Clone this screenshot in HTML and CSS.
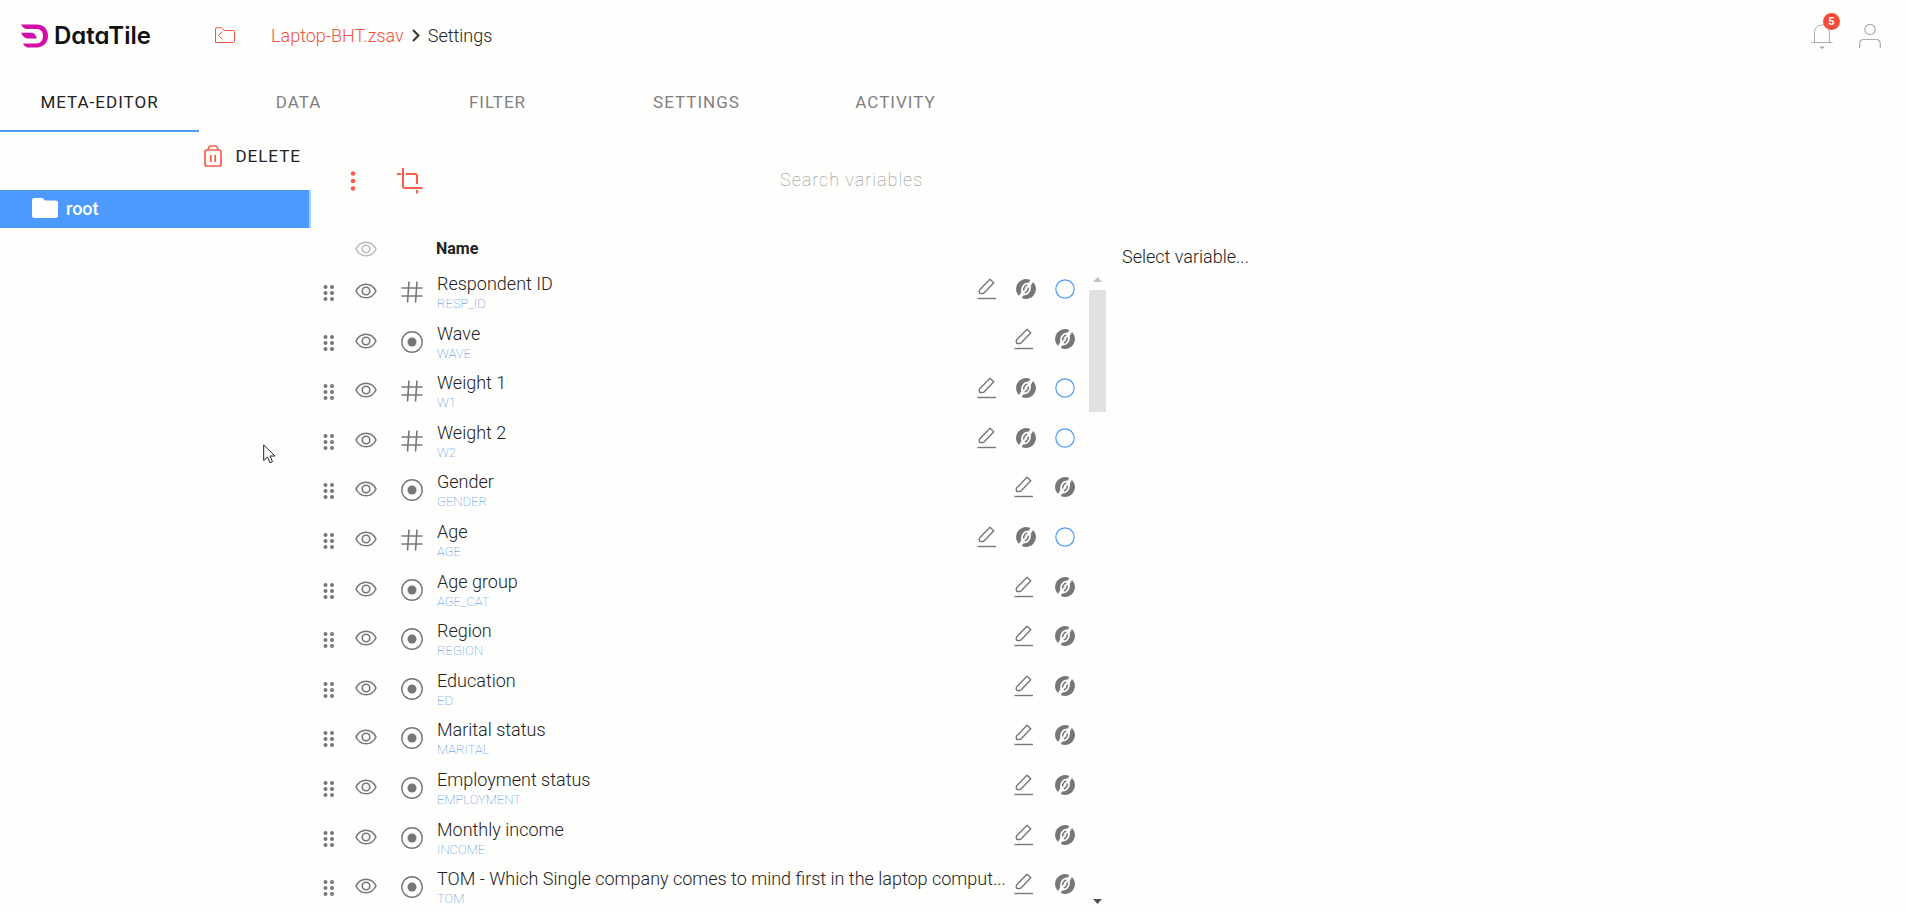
FILE: index.html
```html
<!DOCTYPE html>
<html lang="en">
<head>
    <meta charset="UTF-8">
    <meta name="viewport" content="width=device-width, initial-scale=1.0">
    <title>DataTile - Settings</title>
    <link rel="stylesheet" href="styles.css">
</head>
<body>

    <!-- Icon set -->
    <svg class="icon-set" aria-hidden="true">
        <symbol id="icon-drag" viewBox="0 0 12 18">
            <g fill="currentColor"><circle cx="2.5" cy="3" r="2"/><circle cx="9" cy="3" r="2"/><circle cx="2.5" cy="9" r="2"/><circle cx="9" cy="9" r="2"/><circle cx="2.5" cy="15" r="2"/><circle cx="9" cy="15" r="2"/></g>
        </symbol>
        <symbol id="icon-eye" viewBox="0 0 22 16">
            <path d="M1 8C3.200 3.600 6.800 1.200 11 1.200S18.800 3.600 21 8c-2.200 4.400-5.800 6.800-10 6.800S3.200 12.400 1 8z" fill="none" stroke="currentColor" stroke-width="1.600"/>
            <circle cx="11" cy="8" r="3.800" fill="none" stroke="currentColor" stroke-width="1.600"/>
        </symbol>
        <symbol id="icon-number" viewBox="0 0 22 22">
            <path d="M8 0.500L6.500 21.500M16 0.500L14.500 21.500M0.500 7H21.500M0.500 15H21.500" fill="none" stroke="currentColor" stroke-width="1.600"/>
        </symbol>
        <symbol id="icon-single" viewBox="0 0 22 22">
            <circle cx="11" cy="11" r="10.200" fill="none" stroke="currentColor" stroke-width="1.400"/>
            <circle cx="11" cy="11" r="4.500" fill="currentColor"/>
        </symbol>
        <symbol id="icon-edit" viewBox="0 0 20 22">
            <path d="M3 11.500L13 1.300L16.800 4.800L7 15Q6.500 15.500 5.800 15.500H3.500Q2.300 15.500 2.300 14.300V13Q2.300 12.200 3 11.500z" fill="none" stroke="currentColor" stroke-width="1.400" stroke-linejoin="round"/>
            <path d="M0.500 20.500H19" stroke="currentColor" stroke-width="1.400"/>
        </symbol>
        <symbol id="icon-missing" viewBox="0 0 20 20">
            <path d="M6 0.900A9.800 9.800 0 0 1 14.300 1.100L12.800 3.600C8 3.400 4.600 7.200 5.200 13.200L3 17A9.900 9.900 0 0 1 6 0.900z" fill="currentColor"/>
            <path d="M14 19.100A9.800 9.800 0 0 1 5.700 18.900L7.200 16.400C12 16.600 15.400 12.800 14.800 6.800L17 3A9.900 9.900 0 0 1 14 19.100z" fill="currentColor"/>
            <path d="M7.600 11.500Q7.600 7.500 11.200 6M12.400 8.500Q12.400 12.500 8.800 14" fill="none" stroke="currentColor" stroke-width="1.500"/>
        </symbol>
        <symbol id="icon-weight" viewBox="0 0 20 20">
            <circle cx="10" cy="10" r="9.200" fill="none" stroke="currentColor" stroke-width="1.200"/>
        </symbol>
    </svg>

    <header class="topbar">
        <a class="logo" href="#">
            <svg width="27" height="24" viewBox="0 0 27 24">
                <path d="M0 0.500H15.500C22.500 0.500 27 5 27 11.800S22.500 23.500 15.500 23.500H6.500Q3.500 23 2 19.500H15C19.500 19.500 22 16.500 22 12S19.500 5 15 5H5.500Q2 4.500 0 0.500z" fill="#d10fa8"/>
                <path d="M0 8.800H11.500Q14.500 10 16 14.500H6Q2 13.500 0 8.800z" fill="#d10fa8"/>
            </svg>
            <span>DataTile</span>
        </a>
        <button class="icon-button back" aria-label="Back to folder">
            <svg width="21" height="17" viewBox="0 0 21 17" fill="none" stroke="currentColor" stroke-width="1">
                <path d="M0.500 15.500V2Q0.500 0.800 1.700 0.800H6.500L9.500 3.500H18.500Q19.500 3.500 19.500 4.500V14.500Q19.500 15.500 18.500 15.500z"/>
                <path d="M7.500 4.500L3.500 8.500L7.500 12.500"/>
            </svg>
        </button>
        <nav class="breadcrumb">
            <a href="#">Laptop-BHT.zsav</a>
            <svg width="8" height="13" viewBox="0 0 8 13"><path d="M1 1L6.500 6.500L1 12" fill="none" stroke="#333" stroke-width="2"/></svg>
            <span>Settings</span>
        </nav>
        <div class="user-tools">
            <button class="icon-button bell" aria-label="Notifications">
                <svg width="22" height="26" viewBox="0 0 22 26" fill="none" stroke="currentColor" stroke-width="1">
                    <path d="M0.500 19.500H21.500M3.500 19V10C3.500 5 6.500 2 11 2S18.500 5 18.500 10V19"/>
                    <path d="M9 24H13L11 25.500z" fill="currentColor"/>
                </svg>
                <span class="badge">5</span>
            </button>
            <button class="icon-button" aria-label="Account">
                <svg width="22" height="26" viewBox="0 0 22 26" fill="none" stroke="currentColor" stroke-width="1.200">
                    <circle cx="11" cy="6.500" r="5.200"/>
                    <path d="M0.700 25V21Q0.700 16.500 5 16.500H17Q21.300 16.500 21.300 21V25"/>
                </svg>
            </button>
        </div>
    </header>

    <nav class="tabs">
        <a class="tab active" href="#">META-EDITOR</a>
        <a class="tab" href="#">DATA</a>
        <a class="tab" href="#">FILTER</a>
        <a class="tab" href="#">SETTINGS</a>
        <a class="tab" href="#">ACTIVITY</a>
    </nav>

    <main class="editor">
        <aside class="sidebar">
            <button class="delete">
                <svg width="18" height="22" viewBox="0 0 18 22" fill="none" stroke="#f95c4b" stroke-width="1.700">
                    <rect x="1" y="5" width="16" height="16" rx="2"/>
                    <path d="M4 5Q4.500 1 7 1H11Q13.500 1 14 5M6.800 10V17M11.200 10V17"/>
                </svg>
                DELETE
            </button>
            <a class="folder" href="#">
                <svg width="26" height="20" viewBox="0 0 26 20"><path d="M2 0H10.500L13 2.500H23.500Q26 2.500 26 5V17.500Q26 20 23.500 20H2.500Q0 20 0 17.500V2Q0 0 2 0z" fill="#fff"/></svg>
                root
            </a>
        </aside>

        <section class="variables">
            <div class="toolbar">
                <button class="icon-button accent" aria-label="More">
                    <svg width="6" height="20" viewBox="0 0 6 20" fill="currentColor"><circle cx="3" cy="2.500" r="2.300"/><circle cx="3" cy="10" r="2.300"/><circle cx="3" cy="17.500" r="2.300"/></svg>
                </button>
                <button class="icon-button accent" aria-label="Crop">
                    <svg width="26" height="26" viewBox="0 0 26 26" fill="none" stroke="currentColor" stroke-width="2"><path d="M0 6H4M9 6H18Q20 6 20 8V16M6 0V18Q6 20 8 20H25.500M20 22V25.500"/></svg>
                </button>
                <input class="search" type="text" placeholder="Search variables" aria-label="Search variables">
            </div>
            <div class="table-area">
                <table class="variable-table">
                    <thead>
                        <tr>
                            <th class="eye"><svg width="22" height="16"><use href="#icon-eye"/></svg></th>
                            <th class="name">Name</th>
                        </tr>
                    </thead>
                    <tbody id="variable-rows"></tbody>
                </table>
                <div class="scrollbar">
                    <svg width="9" height="5" viewBox="0 0 9 5"><path d="M0 5L4.500 0L9 5z" fill="#c1c1c1"/></svg>
                    <div class="thumb"></div>
                    <svg class="down" width="9" height="5" viewBox="0 0 9 5"><path d="M0 0L4.500 5L9 0z" fill="#505050"/></svg>
                </div>
            </div>
        </section>

        <section class="details">
            <p>Select variable...</p>
        </section>
    </main>

    <svg class="pointer" width="13" height="20" viewBox="0 0 13 20"><path d="M0.700 1V16.500L4.500 13L7 18.800L9.500 17.700L7 12H12z" fill="#fff" stroke="#222" stroke-width="1"/></svg>

    <script>
        const variables = [
            { label: 'Respondent ID', code: 'RESP_ID', type: 'number' },
            { label: 'Wave', code: 'WAVE', type: 'single' },
            { label: 'Weight 1', code: 'W1', type: 'number' },
            { label: 'Weight 2', code: 'W2', type: 'number' },
            { label: 'Gender', code: 'GENDER', type: 'single' },
            { label: 'Age', code: 'AGE', type: 'number' },
            { label: 'Age group', code: 'AGE_CAT', type: 'single' },
            { label: 'Region', code: 'REGION', type: 'single' },
            { label: 'Education', code: 'ED', type: 'single' },
            { label: 'Marital status', code: 'MARITAL', type: 'single' },
            { label: 'Employment status', code: 'EMPLOYMENT', type: 'single' },
            { label: 'Monthly income', code: 'INCOME', type: 'single' },
            { label: 'TOM - Which Single company comes to mind first in the laptop comput...', code: 'TOM', type: 'single' }
        ];

        function icon(name, width, height) {
            return `<svg width="${width}" height="${height}"><use href="#icon-${name}"/></svg>`;
        }

        function button(label, content) {
            return `<button class="icon-button" aria-label="${label}">${content}</button>`;
        }

        // Only numeric variables can be used as a weight
        function renderRow(variable) {
            const numeric = variable.type === 'number';
            return `<tr>
                <td class="drag">${icon('drag', 12, 18)}</td>
                <td class="eye">${button('Toggle visibility', icon('eye', 22, 16))}</td>
                <td class="type">${icon(variable.type, 22, 22)}</td>
                <td class="name"><div class="label">${variable.label}</div><div class="code">${variable.code}</div></td>
                <td class="actions ${numeric ? 'numeric' : ''}">
                    ${button('Edit', icon('edit', 20, 22))}
                    ${button('Missing values', icon('missing', 20, 20))}
                    ${numeric ? button('Use as weight', icon('weight', 20, 20)).replace('icon-button', 'icon-button weight') : ''}
                </td>
            </tr>`;
        }

        document.getElementById('variable-rows').innerHTML = variables.map(renderRow).join('');
    </script>

</body>
</html>
```
FILE: styles.css
```css
* {
    box-sizing: border-box;
}
body {
    margin: 0;
    min-height: 100vh;
    display: flex;
    flex-direction: column;
    font-family: Roboto, Arial, sans-serif;
    font-size: 18px;
    font-weight: 300;
    color: #222;
    background-color: #fefefd;
}
a {
    color: inherit;
    text-decoration: none;
}
svg {
    display: block;
    flex-shrink: 0;
}
button {
    font: inherit;
    color: inherit;
    padding: 0;
    border: none;
    background: none;
    cursor: pointer;
}
.icon-set {
    position: absolute;
    width: 0;
    height: 0;
}
.icon-button {
    display: block;
}

/* Top bar */
.topbar {
    display: flex;
    align-items: center;
    height: 71px;
    padding: 0 25px 0 21px;
}
.logo {
    display: flex;
    align-items: center;
    gap: 6px;
    width: 194px;
    font-family: Inter, sans-serif;
    font-size: 24px;
    font-weight: 600;
    font-feature-settings: "cv11";
    color: #111;
}
.back {
    color: #f4523f;
}
.breadcrumb {
    display: flex;
    align-items: center;
    gap: 8px;
    margin-left: 35px;
}
.breadcrumb a {
    color: #f4523f;
}
.user-tools {
    display: flex;
    gap: 26px;
    margin-left: auto;
    color: #aaadb2;
}
.bell {
    position: relative;
}
.badge {
    position: absolute;
    top: -10px;
    right: -7px;
    width: 17px;
    height: 17px;
    border-radius: 50%;
    background-color: #f9493a;
    color: #fff;
    font-size: 11px;
    font-weight: 700;
    line-height: 17px;
}

/* Tabs */
.tabs {
    display: flex;
    height: 61px;
}
.tab {
    width: 199px;
    line-height: 63px;
    text-align: center;
    font-size: 17px;
    font-weight: 400;
    letter-spacing: 1px;
    color: #808080;
}
.tab.active {
    color: #222;
    border-bottom: 2px solid #4d9aff;
}

/* Editor */
.editor {
    flex: 1;
    display: flex;
}
.sidebar {
    width: 311px;
}
.delete {
    display: flex;
    align-items: center;
    gap: 13px;
    height: 48px;
    margin: 0 10px 10px auto;
    font-size: 17px;
    font-weight: 400;
    letter-spacing: 1px;
}
.folder {
    display: flex;
    align-items: center;
    gap: 8px;
    height: 38px;
    padding: 0 0 2px 32px;
    border-right: 2px solid #a9d0ff;
    background-color: #4d9aff;
    color: #fff;
    font-weight: 500;
}
.variables {
    display: flex;
    flex-direction: column;
    width: 795px;
}
.toolbar {
    display: flex;
    align-items: center;
    height: 98px;
    padding-left: 39px;
}
.toolbar .icon-button {
    margin-right: 41px;
}
.accent {
    color: #f95c4b;
}
.search {
    width: 280px;
    margin-left: 316px;
    padding: 0 0 3px;
    border: none;
    outline: none;
    background: none;
    font: inherit;
    letter-spacing: 1px;
}
.search::placeholder {
    color: #888;
    font-weight: 100;
}
.table-area {
    flex: 1;
    display: flex;
    gap: 14px;
}
.variable-table {
    flex: 1;
    min-width: 0;
    display: flex;
    flex-direction: column;
}
.variable-table tr {
    display: flex;
    flex: 1;
}
.variable-table th,
.variable-table td {
    padding: 0;
    text-align: left;
}
.variable-table thead tr {
    align-items: center;
    height: 37px;
}
.variable-table thead .eye {
    margin-left: 44px;
    width: 81px;
    color: #bbb;
}
.variable-table thead .name {
    font-size: 16px;
    font-weight: 700;
}
.variable-table tbody {
    flex: 1;
    display: flex;
    flex-direction: column;
    color: #777;
}
.variable-table .drag {
    width: 44px;
    padding: 17px 0 0 12px;
}
.variable-table tbody .eye {
    width: 46px;
    padding-top: 16px;
}
.variable-table .type {
    width: 36px;
    padding-top: 14px;
}
.variable-table tbody .name {
    flex: 1;
    min-width: 0;
    padding-top: 6px;
}
.label {
    white-space: nowrap;
    line-height: 22px;
    color: #222;
}
.code {
    font-size: 13px;
    font-weight: 100;
    line-height: 18px;
    color: #2f7fe0;
}
.variable-table .actions {
    display: flex;
    gap: 21px;
    padding: 11px 0 0 8px;
}
.variable-table .actions.numeric {
    gap: 19px;
}
.weight {
    color: #4d9aff;
}
.variable-table .actions .icon-button {
    height: 22px;
}
.scrollbar {
    display: flex;
    flex-direction: column;
    align-items: center;
    gap: 8px;
    width: 17px;
    padding: 47px 0 8px;
}
.thumb {
    width: 17px;
    height: 122px;
    background-color: #e1e1e3;
}
.down {
    margin-top: auto;
}
.details {
    flex: 1;
    padding: 114px 16px 0;
}
.details p {
    margin: 0;
    line-height: 22px;
}
.pointer {
    position: absolute;
    left: 263px;
    top: 444px;
}
```
